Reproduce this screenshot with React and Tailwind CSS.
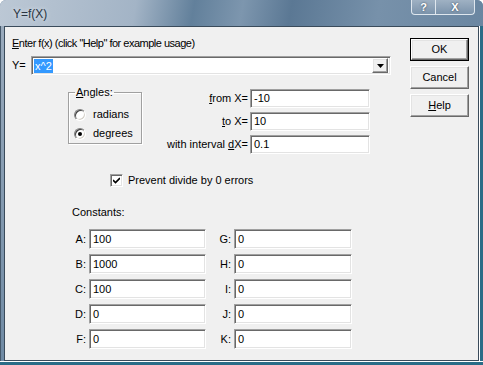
import React from "react";

const sunken =
    "bg-white border border-t-[#a0a0a0] border-l-[#a0a0a0] border-b-white border-r-white shadow-[inset_1px_1px_0_#696969,inset_-1px_-1px_0_#e3e3e3]";
const raised =
    "bg-[#f0f0f0] border border-t-white border-l-white border-b-[#696969] border-r-[#696969] shadow-[inset_-1px_-1px_0_#a0a0a0,inset_1px_1px_0_#e3e3e3]";

const leftConsts = [
    ["A:", "100"],
    ["B:", "1000"],
    ["C:", "100"],
    ["D:", "0"],
    ["F:", "0"],
];
const rightConsts = [
    ["G:", "0"],
    ["H:", "0"],
    ["I:", "0"],
    ["J:", "0"],
    ["K:", "0"],
];

function TextBox({value, className}) {
    return (
        <div className={`${sunken} ${className} flex items-center px-[3px] leading-[13px]`}>
            {value}
        </div>
    );
}

function Radio({label, checked}) {
    return (
        <div className="flex items-center h-[19px] gap-[7px]">
            <div className="w-[12px] h-[12px] rounded-full bg-white border border-t-[#808080] border-l-[#808080] border-b-white border-r-white shadow-[inset_1px_1px_0_#404040,inset_-1px_-1px_0_#d4d0c8] flex items-center justify-center">
                {checked && <div className="w-[4px] h-[4px] rounded-full bg-black"></div>}
            </div>
            <span>{label}</span>
        </div>
    );
}

function Button({children, isDefault}) {
    if (isDefault) {
        return (
            <div className="h-[23px] border border-black flex">
                <div className={`${raised} flex-1 flex items-center justify-center`}>{children}</div>
            </div>
        );
    }
    return (
        <div className={`${raised} h-[23px] flex items-center justify-center`}>{children}</div>
    );
}

export default function App() {
    return (
        <div className="w-[483px] h-[365px] flex flex-col font-['Liberation_Sans',Arial,sans-serif] text-[11px] leading-[13px] text-black bg-[#6d88a3] rounded-t-[6px] overflow-hidden">
            {/* title bar */}
            <div className="h-[26px] shrink-0 flex items-start bg-[linear-gradient(100deg,#bcc8d5_0%,#a3b4c6_28%,#62809b_40%,#7d96ae_50%,#5b7894_60%,#7791aa_78%,#6a86a1_100%)]">
                <div className="pl-[13px] pt-[7px] text-[12px] leading-[14px] text-[#2a3542] [text-shadow:0_0_4px_#e6edf3]">
                    Y=f(X)
                </div>
                <div className="ml-auto mr-[8px] flex">
                    <div className="w-[25px] h-[15px] border border-[#dfe7ee] border-t-0 rounded-bl-[4px] bg-[linear-gradient(to_bottom,#9fb1c3,#7b93ab)] flex items-center justify-center text-white font-bold text-[11px] [text-shadow:0_0_2px_#2a3a4a]">
                        ?
                    </div>
                    <div className="w-[39px] h-[15px] border border-[#dfe7ee] border-t-0 border-l-0 rounded-br-[4px] bg-[linear-gradient(to_bottom,#9fb1c3,#7b93ab)] flex items-center justify-center text-white font-bold text-[11px] [text-shadow:0_0_2px_#2a3a4a]">
                        X
                    </div>
                </div>
            </div>

            <div className="flex flex-1">
                {/* left frame */}
                <div className="w-[4px] bg-[linear-gradient(to_bottom,#9aabbd,#6f8aa4)] border-l border-[#46596b]"></div>

                {/* client area */}
                <div className="flex-1 flex border border-[#3a4b5b] bg-[#f0f0f0]">
                    <div className="flex-1 flex flex-col pl-[7px]">
                        <div className="mt-[10px] tracking-[-0.5px]">
                            <span className="underline">E</span>nter f(x) (click "Help" for example usage)
                        </div>

                        {/* combo */}
                        <div className="mt-[6px] flex items-center">
                            <span className="w-[19px]">Y=</span>
                            <div className={`${sunken} w-[360px] h-[19px] flex items-center pl-[2px] pr-[2px]`}>
                                <span className="bg-[#3399ff] text-white px-[1px] leading-[14px]">x^2</span>
                                <div className={`${raised} ml-auto w-[16px] h-[15px] flex items-center justify-center`}>
                                    <svg width="7" height="4" viewBox="0 0 7 4">
                                        <path d="M0 0H7L3.5 4Z" fill="#000" />
                                    </svg>
                                </div>
                            </div>
                        </div>

                        {/* angles + range */}
                        <div className="mt-[11px] flex items-start">
                            <fieldset className="ml-[56px] w-[74px] border border-[#a0a0a0] shadow-[1px_1px_0_#fff,inset_1px_1px_0_#fff] pl-[5px] pt-[6px]">
                                <legend className="ml-[1px] px-[1px]">
                                    <span className="underline">A</span>ngles:
                                </legend>
                                <Radio label="radians" />
                                <Radio label="degrees" checked />
                            </fieldset>
                            <div className="pt-[3px] flex flex-col gap-[4px]">
                                <div className="flex items-center">
                                    <span className="w-[108px] text-right pr-[2px]">
                                        <span className="underline">f</span>rom X=
                                    </span>
                                    <TextBox value="-10" className="w-[120px] h-[19px]" />
                                </div>
                                <div className="flex items-center">
                                    <span className="w-[108px] text-right pr-[2px]">
                                        <span className="underline">t</span>o X=
                                    </span>
                                    <TextBox value="10" className="w-[120px] h-[19px]" />
                                </div>
                                <div className="flex items-center">
                                    <span className="w-[108px] text-right pr-[2px]">
                                        with interval <span className="underline">d</span>X=
                                    </span>
                                    <TextBox value="0.1" className="w-[120px] h-[19px]" />
                                </div>
                            </div>
                        </div>

                        {/* checkbox */}
                        <div className="mt-[20px] ml-[98px] flex items-center gap-[5px]">
                            <div className={`${sunken} w-[13px] h-[13px] flex items-center justify-center`}>
                                <svg width="7" height="7" viewBox="0 0 7 7">
                                    <path d="M0 3L2.5 5.5L7 1" stroke="#000" strokeWidth="1.6" fill="none" />
                                </svg>
                            </div>
                            <span>Prevent divide by 0 errors</span>
                        </div>

                        {/* constants */}
                        <div className="mt-[19px] ml-[60px]">Constants:</div>
                        <div className="mt-[10px] ml-[53px] flex">
                            <div className="flex flex-col gap-[5px]">
                                {leftConsts.map(([k, v]) => (
                                    <div key={k} className="flex items-center">
                                        <span className="w-[21px] text-right mr-[3px]">{k}</span>
                                        <TextBox value={v} className="w-[117px] h-[20px]" />
                                    </div>
                                ))}
                            </div>
                            <div className="flex flex-col gap-[5px]">
                                {rightConsts.map(([k, v]) => (
                                    <div key={k} className="flex items-center">
                                        <span className="w-[25px] text-right mr-[3px]">{k}</span>
                                        <TextBox value={v} className="w-[118px] h-[20px]" />
                                    </div>
                                ))}
                            </div>
                        </div>
                    </div>

                    {/* buttons */}
                    <div className="w-[59px] mr-[9px] pt-[11px] flex flex-col gap-[5px]">
                        <Button isDefault>OK</Button>
                        <Button>Cancel</Button>
                        <Button>
                            <span>
                                <span className="underline">H</span>elp
                            </span>
                        </Button>
                    </div>
                </div>

                {/* right frame */}
                <div className="w-[4px] bg-[#2a6c87] border-l border-white"></div>
            </div>
            <div className="h-[4px] shrink-0 bg-[#2a6c87] border-t border-white"></div>
        </div>
    );
}
